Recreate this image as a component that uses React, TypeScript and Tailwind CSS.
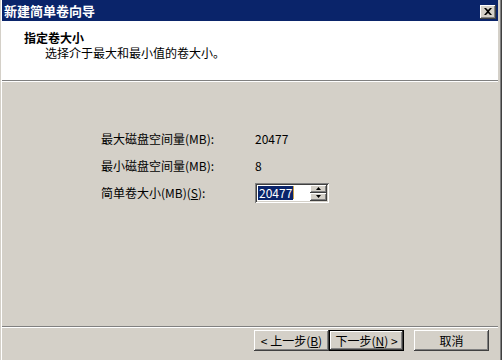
import React from 'react';

const FONT = { fontFamily: '"Noto Sans CJK SC", "Liberation Sans", sans-serif' };

const raised =
  'shadow-[inset_-1px_-1px_#404040,inset_1px_1px_#ffffff,inset_-2px_-2px_#808080,inset_2px_2px_#d4d0c8]';
const sunken =
  'shadow-[inset_1px_1px_#808080,inset_-1px_-1px_#ffffff,inset_2px_2px_#404040,inset_-2px_-2px_#d4d0c8]';

function WinButton({ children, primary }: { children: React.ReactNode; primary?: boolean }) {
  return (
    <div className={`w-[75px] h-[21px] ${primary ? 'border border-black' : ''}`}>
      <button
        className={`w-full h-full bg-[#d4d0c8] text-[12px] text-black flex items-center justify-center leading-none ${raised}`}
      >
        {children}
      </button>
    </div>
  );
}

export default function App() {
  return (
    <div
      className="w-[502px] h-[360px] bg-[#d4d0c8] flex flex-col pl-[2px] pr-[4px] shadow-[inset_1px_0_#d4d0c8,inset_2px_0_#ffffff,inset_-1px_0_#404040,inset_-2px_0_#808080,inset_-4px_0_#d4d0c8] overflow-hidden text-black"
      style={FONT}
    >
      {/* Title bar */}
      <div className="h-[21px] bg-[#0a246a] flex items-center justify-between pl-[2px] pr-[2px]">
        <span className="text-white font-bold text-[13px] leading-none">新建简单卷向导</span>
        <div
          className={`w-[16px] h-[14px] bg-[#d4d0c8] flex items-center justify-center mt-[2px] ${raised}`}
        >
          <svg width="8" height="7" viewBox="0 0 8 7">
            <path d="M0 0h2l2 2 2-2h2L5 3.5 8 7H6L4 5 2 7H0l3-3.5z" fill="#000" />
          </svg>
        </div>
      </div>

      {/* Header */}
      <div className="h-[59px] bg-white pl-[22px] pt-[11px]">
        <div className="text-[12px] font-bold leading-[12px] h-[12px]">指定卷大小</div>
        <div className="text-[12px] leading-[12px] h-[12px] mt-[3px] pl-[21px]">选择介于最大和最小值的卷大小。</div>
      </div>
      <div className="h-px bg-[#808080]" />
      <div className="h-px bg-white" />

      {/* Body */}
      <div className="flex-1 pt-[43px] pl-[99px] text-[12px]">
        <div className="flex items-center h-[27px]">
          <div className="w-[154px]">最大磁盘空间量(MB):</div>
          <div>20477</div>
        </div>
        <div className="flex items-center h-[27px]">
          <div className="w-[154px]">最小磁盘空间量(MB):</div>
          <div>8</div>
        </div>
        <div className="flex items-center h-[27px]">
          <div className="w-[154px]">
            简单卷大小(MB)(<u>S</u>):
          </div>
          <div className={`w-[74px] h-[20px] bg-white flex items-center pl-[3px] pr-[2px] ${sunken}`}>
            <span className="bg-[#0a246a] text-white leading-[14px] px-px">20477</span>
            <span className="w-px h-[13px] bg-[#c8a24a]" />
            <div className="ml-auto flex flex-col">
              <div className={`w-[17px] h-[8px] bg-[#d4d0c8] flex items-center justify-center ${raised}`}>
                <svg width="5" height="3" viewBox="0 0 5 3">
                  <path d="M2.5 0L5 3H0z" fill="#000" />
                </svg>
              </div>
              <div className={`w-[17px] h-[8px] bg-[#d4d0c8] flex items-center justify-center ${raised}`}>
                <svg width="5" height="3" viewBox="0 0 5 3">
                  <path d="M0 0h5L2.5 3z" fill="#000" />
                </svg>
              </div>
            </div>
          </div>
        </div>
      </div>

      {/* Bottom separator */}
      <div className="h-px bg-[#808080]" />
      <div className="h-px bg-white" />

      {/* Buttons */}
      <div className="h-[32px] flex items-start pt-[2px] pl-[252px]">
        <WinButton>
          &lt; 上一步(<u>B</u>)
        </WinButton>
        <WinButton primary>
          下一步(<u>N</u>) &gt;
        </WinButton>
        <div className="w-[10px]" />
        <WinButton>取消</WinButton>
      </div>
    </div>
  );
}
